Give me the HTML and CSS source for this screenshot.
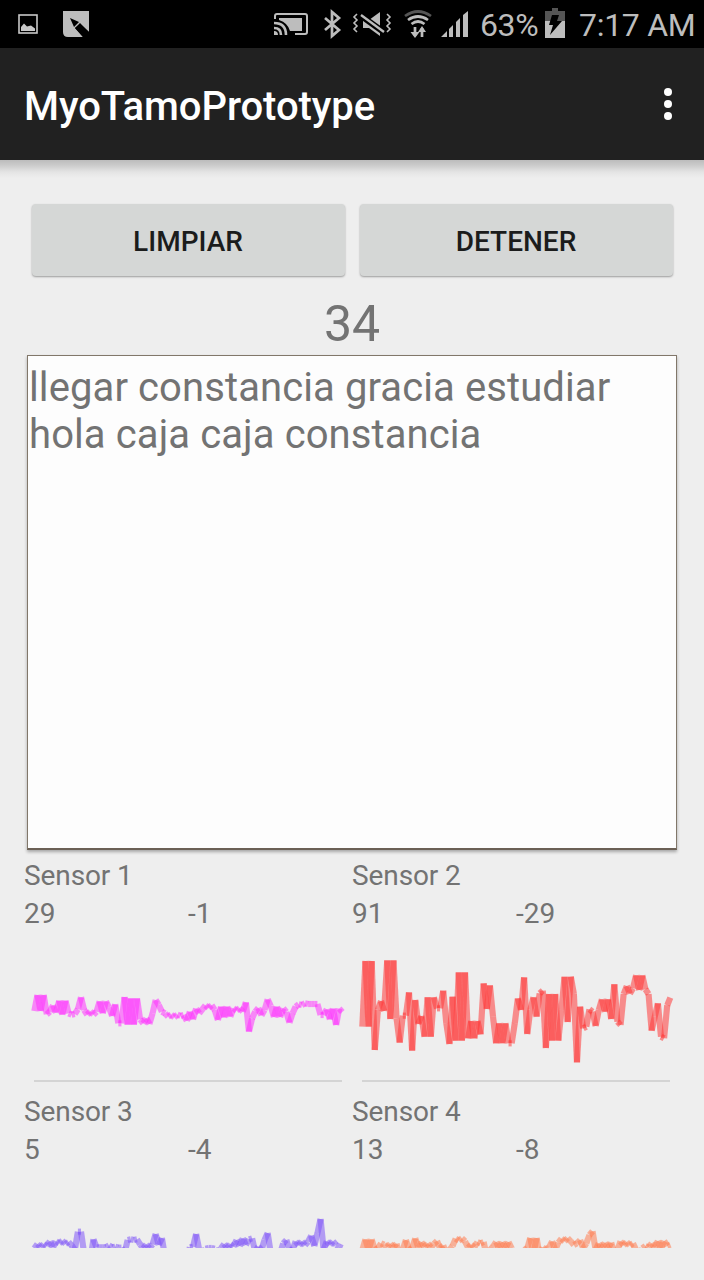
FILE: index.html
```html
<!DOCTYPE html>
<html lang="es">
<head>
<meta charset="utf-8">
<title>MyoTamoPrototype</title>
<link rel="stylesheet" href="styles.css">
</head>
<body>
<header class="status-bar">
  <svg class="status-left" width="100" height="48" viewBox="0 0 100 48">
    <rect x="19" y="15" width="18" height="18" fill="none" stroke="#c8c8c8" stroke-width="1.6"/>
    <path d="M21 31v-4l3-3.500 3 3 4-1 4 3v2.500z" fill="#c8c8c8"/>
    <path d="M63 11h26v21l-9-9-5 5 8 9H68q-5 0-5-5z" fill="#bdbdbd"/>
    <path d="M70 18l9 4-5 5zM80 24l9 8v5h-6l-8-9z" fill="#000"/>
  </svg>
  <svg class="status-icons" width="206" height="48" viewBox="262 0 206 48">
    <g fill="none" stroke="#bdbdbd">
      <path d="M275 19v-3q0-2 2-2h28q2 0 2 2v16q0 2-2 2h-10" stroke-width="2"/>
      <path d="M274 23q12 0 12 12M274 28q7 0 7 7" stroke-width="2.6"/>
    </g>
    <path d="M279 18h23v13h-12q-2-8-11-11zM274 31q4 0 4 4h-4z" fill="#bdbdbd"/>
    <path d="M325 18l14 12-7 6V12l7 6-14 12" fill="none" stroke="#bdbdbd" stroke-width="2.7"/>
    <path d="M363 20h6l11-8v24l-11-8h-6z" fill="#bdbdbd"/>
    <path d="M360 15l25 18" stroke="#000" stroke-width="6"/>
    <path d="M361 15l23 17" stroke="#bdbdbd" stroke-width="2.4"/>
    <path d="M357 14l-3 3 3 3-3 3 3 3-3 3 3 3M387 14l3 3-3 3 3 3-3 3 3 3-3 3" fill="none" stroke="#bdbdbd" stroke-width="1.6"/>
    <g fill="none" stroke="#bdbdbd" stroke-width="2.7">
      <path d="M405 16q13-9 26 0" stroke="#555"/>
      <path d="M408 20q10-7 20 0M411.500 24q6.500-5 13 0"/>
      <path d="M415 27v9M422 37v-9"/>
    </g>
    <path d="M410.500 32h9l-4.500 6zM418 32h8l-4-6z" fill="#bdbdbd"/>
    <path d="M441 37l6-6v6zM449 29l4-4v12h-4zM456 22l4-4v19h-4zM463 15l5-4v26h-5z" fill="#bdbdbd"/>
  </svg>
  <span class="battery-text">63%</span>
  <svg class="battery" width="20" height="48" viewBox="545 0 20 48">
    <path d="M545 11h7V8h6v3h7v10h-20z" fill="#555"/>
    <path d="M545 21h20v17h-20z" fill="#bdbdbd"/>
    <path d="M552 15h7l-2 6h5l-12 14 3-10h-4z" fill="#000"/>
  </svg>
  <span class="clock">7:17 AM</span>
</header>
<div class="app-bar">
  <h1 class="title">MyoTamoPrototype</h1>
  <div class="overflow"><i class="dot"></i><i class="dot"></i><i class="dot"></i></div>
</div>
<main class="content">
  <div class="buttons">
    <button class="button">LIMPIAR</button>
    <button class="button">DETENER</button>
  </div>
  <div class="count">34</div>
  <div class="words">llegar constancia gracia estudiar<br>hola caja caja constancia</div>
  <div class="sensors">
    <section class="sensor">
      <div class="label">Sensor 1</div>
      <div class="values"><span>29</span><span>-1</span></div>
      <svg class="chart magenta" data-sensor="1" viewBox="0 0 984 480"></svg>
    </section>
    <section class="sensor">
      <div class="label">Sensor 2</div>
      <div class="values"><span>91</span><span>-29</span></div>
      <svg class="chart red" data-sensor="2" viewBox="0 0 984 480"></svg>
    </section>
    <section class="sensor">
      <div class="label">Sensor 3</div>
      <div class="values"><span>5</span><span>-4</span></div>
      <svg class="chart violet" data-sensor="3" viewBox="0 0 984 480"></svg>
    </section>
    <section class="sensor">
      <div class="label">Sensor 4</div>
      <div class="values"><span>13</span><span>-8</span></div>
      <svg class="chart orange" data-sensor="4" viewBox="0 0 984 480"></svg>
    </section>
  </div>
</main>
<script src="charts.js"></script>
</body>
</html>
```
FILE: styles.css
```css
* { box-sizing: border-box; }
body {
  margin: 0;
  height: 1280px;
  overflow: hidden;
  background: #eee;
  color: #737373;
  font-family: Roboto, sans-serif;
}
.status-bar {
  display: flex;
  height: 48px;
  background: #000;
  color: #bdbdbd;
  font-size: 32px;
  line-height: 50px;
  white-space: nowrap;
}
.status-bar svg { flex: none; display: block; }
.status-icons { margin-left: 162px; }
.battery-text { width: 65px; margin-left: 12px; letter-spacing: -0.4px; }
.clock { margin-left: 14px; letter-spacing: -0.3px; }
.app-bar {
  display: flex;
  align-items: center;
  justify-content: space-between;
  height: 112px;
  padding: 0 32px 0 24px;
  background: #212121;
}
.title {
  margin: 6px 0 0;
  color: #fff;
  font-size: 40px;
  font-weight: 500;
  line-height: 48px;
  letter-spacing: -0.06px;
}
.overflow { display: flex; flex-direction: column; gap: 4px; }
.dot { width: 8px; height: 8px; border-radius: 50%; background: #fff; }
.content {
  height: 1088px;
  padding: 44px 24px 0;
  overflow: hidden;
  background: linear-gradient(#bcbcbc, #cacaca 5px, #e4e4e4 12px, #eee 18px);
}
.buttons {
  display: grid;
  grid-template-columns: 1fr 1fr;
  gap: 15px;
  padding: 0 7.5px;
}
.button {
  height: 72px;
  padding: 2px 0 0;
  border: 0;
  border-radius: 4px;
  background: #d5d7d6;
  box-shadow: 0 1px 2px rgba(0, 0, 0, 0.35);
  color: #1b1c1c;
  font: 500 28px Roboto, sans-serif;
}
.count {
  height: 79px;
  padding-top: 18px;
  font-size: 50px;
  line-height: 60px;
  text-align: center;
}
.words {
  height: 495px;
  margin: 0 3px;
  padding: 8px 1px;
  border: 1px solid #81776a;
  border-bottom: 2px solid #6b6055;
  background: #fdfdfd;
  box-shadow: 0 2px 3px rgba(0, 0, 0, 0.3);
  font-size: 40px;
  line-height: 47px;
  letter-spacing: 0.1px;
}
.sensors {
  display: grid;
  grid-template-columns: 328px 328px;
  padding-top: 7px;
  font-size: 28px;
  line-height: 38px;
}
.sensor { height: 236px; }
.label, .values { height: 38px; }
.label { letter-spacing: -0.1px; }
.values { display: grid; grid-template-columns: 1fr 1fr; }
.chart {
  display: block;
  width: 328px;
  height: 160px;
  fill: none;
  stroke-width: 18.500;
}
.segment { stroke-opacity: 0.54; }
.axis { stroke: #d4d4d4; stroke-width: 6; }
.magenta { stroke: #ff30ff; }
.red { stroke: #ff3838; }
.violet { stroke: #8055f8; }
.orange { stroke: #ff7c50; }
```
FILE: charts.js
```js
const readings = {
  1: { offset: 141, values: [93,45,93,45,103,95,76,98,62,104,62,100,104,102,88,52,90,104,94,104,95,64,100,64,82,108,73,130,130,51,134,55,134,55,118,130,115,132,100,60,75,95,100,110,104,112,104,108,105,122,95,118,86,100,88,76,84,76,90,120,80,112,80,110,85,92,84,95,67,155,115,95,84,106,90,58,78,111,80,111,85,96,128,100,80,73,75,70,72,72,72,72,105,105,88,118,86,135,86,96] },
  2: { offset: 51, values: [230,33,230,33,300,180,153,183,31,207,31,205,278,197,197,127,302,150,222,198,260,142,260,142,175,175,122,220,282,140,272,67,272,67,265,213,265,213,253,100,177,106,200,280,220,280,220,280,280,220,145,180,82,252,180,142,200,130,122,294,132,272,132,272,180,80,216,80,132,337,170,235,230,178,185,228,180,148,185,148,207,103,215,225,132,108,131,115,76,120,76,118,132,242,200,160,260,265,166,143] },
  3: { offset: 93, values: [145,132,142,132,138,124,142,124,130,122,132,126,136,150,95,95,160,180,180,118,142,142,142,142,136,142,140,143,143,160,120,118,120,118,133,145,133,145,133,102,135,114,170,180,180,180,180,180,180,180,142,140,102,150,160,146,144,144,146,160,145,132,145,132,140,120,138,115,135,118,115,155,140,150,120,99,160,180,180,160,130,120,150,150,124,136,124,136,125,107,138,100,57,150,124,135,124,135,140,144] },
  4: { offset: 93, values: [150,118,150,118,150,145,130,134,142,131,143,131,170,150,120,150,145,115,143,126,142,130,143,132,123,145,136,160,150,138,116,122,115,124,143,134,142,126,130,126,170,150,140,126,145,126,145,126,145,175,180,170,150,145,114,160,114,165,142,150,142,124,150,128,116,124,114,124,135,130,120,145,130,105,94,150,130,145,128,145,128,160,150,124,136,126,136,130,150,170,145,138,142,130,143,123,145,123,138,134] }
};
const START = 31;
const STEP = 9.333;

function addLine(svg, className, x1, y1, x2, y2) {
  const line = document.createElementNS("http://www.w3.org/2000/svg", "line");
  line.setAttribute("class", className);
  line.setAttribute("x1", x1);
  line.setAttribute("y1", y1);
  line.setAttribute("x2", x2);
  line.setAttribute("y2", y2);
  svg.appendChild(line);
}

document.querySelectorAll(".chart").forEach((svg) => {
  const { offset, values } = readings[svg.dataset.sensor];
  addLine(svg, "axis", 30, 444, 954, 444);
  for (let i = 1; i < values.length; i++) {
    addLine(svg, "segment", START + (i - 1) * STEP, values[i - 1] + offset, START + i * STEP, values[i] + offset);
  }
});
```
